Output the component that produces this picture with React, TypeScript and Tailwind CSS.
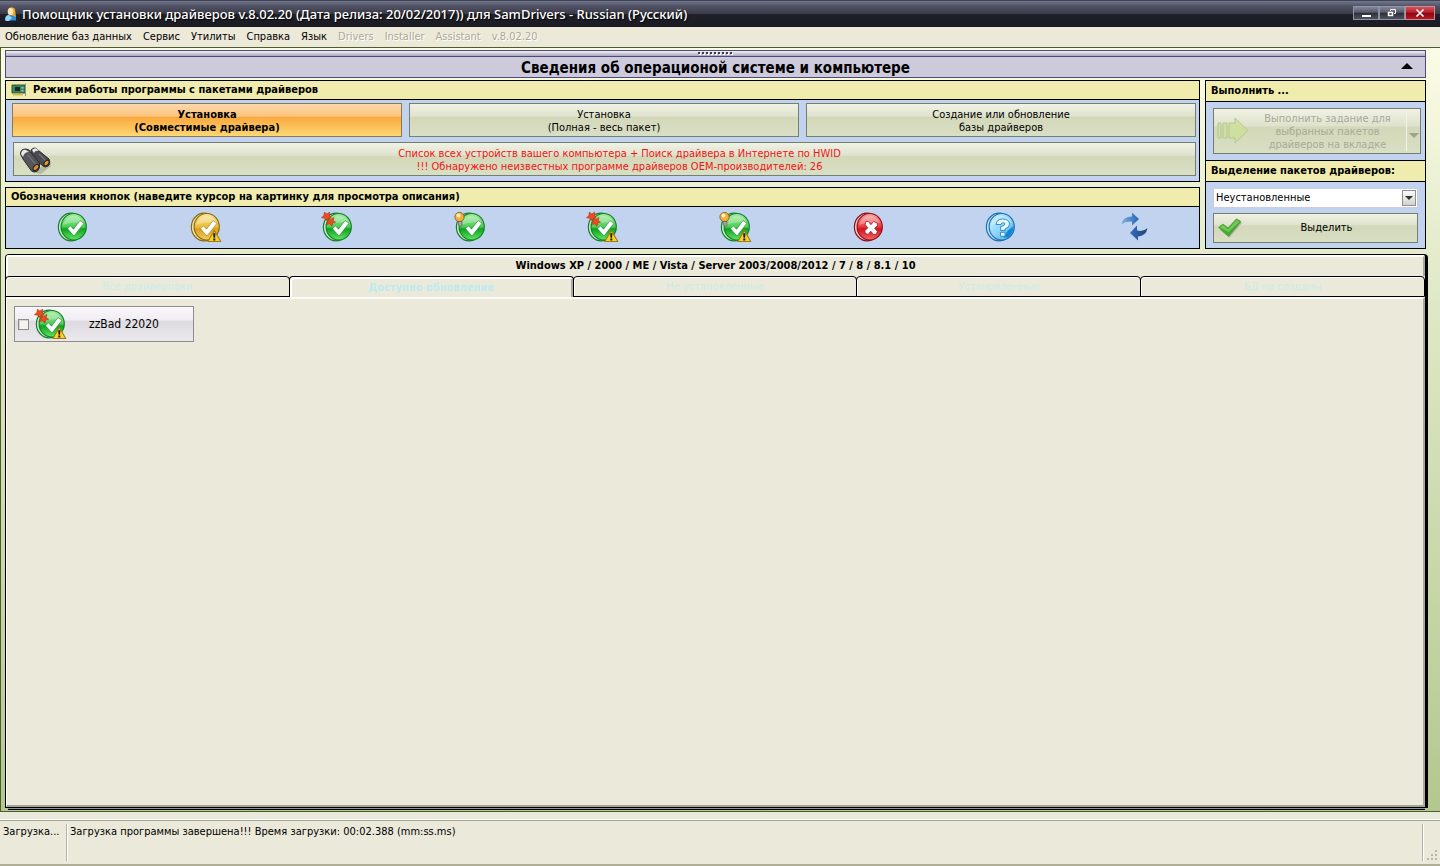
import { type ReactNode } from "react";

const olive =
  "border border-[#757f70] bg-[linear-gradient(#f1f2e4_0%,#dfe2cd_38%,#d3d8b9_42%,#d9dfc4_100%)]";

function Defs() {
  return (
    <svg className="absolute h-0 w-0" aria-hidden="true">
      <defs>
        <linearGradient id="green" x1="0" y1="0" x2="0" y2="1">
          <stop offset="0" stopColor="#a5eda2" />
          <stop offset=".5" stopColor="#4dcf56" />
          <stop offset=".58" stopColor="#0fa31f" />
          <stop offset="1" stopColor="#5fe863" />
        </linearGradient>
        <linearGradient id="gold" x1="0" y1="0" x2="0" y2="1">
          <stop offset="0" stopColor="#fae69a" />
          <stop offset=".5" stopColor="#eabd39" />
          <stop offset=".58" stopColor="#d69f1c" />
          <stop offset="1" stopColor="#f5d25c" />
        </linearGradient>
        <linearGradient id="red" x1="0" y1="0" x2="0" y2="1">
          <stop offset="0" stopColor="#fba6a6" />
          <stop offset=".5" stopColor="#e8383f" />
          <stop offset=".58" stopColor="#d3121b" />
          <stop offset="1" stopColor="#f8646c" />
        </linearGradient>
        <linearGradient id="blue" x1="0" y1="0" x2="1" y2="1">
          <stop offset="0" stopColor="#d2f2fd" />
          <stop offset=".5" stopColor="#8fd6f7" />
          <stop offset="1" stopColor="#3aa6ea" />
        </linearGradient>
        <linearGradient id="arrow" x1="0" y1="0" x2="1" y2="0">
          <stop offset="0" stopColor="#7fb2e6" />
          <stop offset="1" stopColor="#2462b4" />
        </linearGradient>
        <linearGradient id="arrowBack" x1="0" y1="0" x2="1" y2="0">
          <stop offset="0" stopColor="#2f6fc4" />
          <stop offset="1" stopColor="#27406f" />
        </linearGradient>
      </defs>
    </svg>
  );
}

const rims: Record<string, string> = {
  green: "#17802a",
  gold: "#8a6a12",
  red: "#8e1219",
  blue: "#1c6fb2",
};

const backs: Record<string, string> = {
  green: "#c9f0cb",
  gold: "#f6e7b0",
  red: "#f9c9cb",
  blue: "#c9e9fb",
};

type Tone = "green" | "gold" | "red" | "blue";

function Badge({
  tone,
  label,
  warning,
  cross,
  bulb,
  children,
}: {
  tone: Tone;
  label: string;
  warning?: boolean;
  cross?: boolean;
  bulb?: boolean;
  children?: ReactNode;
}) {
  return (
    <svg width="34" height="32" viewBox="0 0 34 32" role="img" aria-label={label}>
      <ellipse cx="16" cy="16" rx="12.6" ry="13.8" fill={backs[tone]} stroke={rims[tone]} strokeWidth="1.200" />
      <ellipse cx="18.700" cy="15.800" rx="12.600" ry="13.300" fill={`url(#${tone})`} stroke={rims[tone]} strokeWidth="1.200" />
      <path d="M8 14 A11 11.500 0 0 1 29 12 Q18 10 8 14Z" fill="#fff" opacity=".28" />
      {children ?? (
        <path
          d="M12.500 17.800 l3-3 3 3.400 6.500-8.600 4 2.600 -10 12.800Z"
          fill="#fff"
          stroke={tone === "gold" ? "#9a7716" : "#17802a"}
          strokeWidth=".6"
        />
      )}
      {cross && (
        <g fill="#ee4a22" stroke="#b03413" strokeWidth=".6" strokeLinejoin="round">
          <path d="M4.500 1 L6.500 3 L9.800 1.200 L9.500 4.500 L11 6.500 L8.500 7.200 L6.500 9.500 L4.800 7.200 L1.500 6.800 L3.800 4.500Z" />
          <path d="M8.500 7.500 L11 8.200 L14 6.500 L13.200 9.500 L15.600 11.200 L12.600 12 L12 15.200 L9.800 13 L6 13.500 L7.800 11Z" />
        </g>
      )}
      {bulb && (
        <g>
          <circle cx="6.500" cy="6" r="4.600" fill="#f2b13f" stroke="#8f5f1b" strokeWidth=".9" />
          <circle cx="5.400" cy="4.600" r="2" fill="#fff0b8" />
          <path d="M5 10.500h4v4l-1.600 1.200L5.400 14Z" fill="#a3a3a3" stroke="#5b5b5b" strokeWidth=".7" />
        </g>
      )}
      {warning && (
        <g>
          <path
            d="M26.300 19.500 L32.800 30.500 H19.800Z"
            fill="#f8d22c"
            stroke="#a37b10"
            strokeWidth="1.100"
            strokeLinejoin="round"
          />
          <path d="M25.200 22.300h2.200l-.3 4.400h-1.600ZM25.300 27.600h2v1.800h-2Z" fill="#1d1a0a" />
        </g>
      )}
    </svg>
  );
}

function SwapArrows() {
  return (
    <svg width="34" height="32" viewBox="0 0 34 32" role="img" aria-label="Обновить">
      <path d="M5.500 13.500 Q6.500 5.500 16 5.500V1.500l7 6.500L16 14.500v-4Q9.500 10 5.500 13.500Z" fill="url(#arrow)" />
      <path d="M31.500 17 Q30 25 22 25.500V29.500l-8-7.500L21 14.500v5Q27.500 21 31.500 17Z" fill="url(#arrowBack)" />
    </svg>
  );
}

function Legend() {
  return (
    <div className="grid grow grid-cols-9 items-start justify-items-center bg-[#c1d3ef] pt-1">
      <Badge tone="green" label="Установлен" />
      <Badge tone="gold" label="Есть предупреждение" warning />
      <Badge tone="green" label="Новее" cross />
      <Badge tone="green" label="Рекомендуется" bulb />
      <Badge tone="green" label="Новее, предупреждение" cross warning />
      <Badge tone="green" label="Рекомендуется, предупреждение" bulb warning />
      <Badge tone="red" label="Ошибка">
        <path
          d="M14.800 10.500l2.600 0 2.500 3.200 2.700-3.200 3.500 1.500 .3 2.600-2.800 2.700 2.700 3-.8 2.700-3 .5-2.700-3.300-2.700 3.300-3-1.500-.2-2.500 3-2.700-2.700-3Z"
          fill="#fff"
          stroke="#8e1219"
          strokeWidth=".7"
        />
      </Badge>
      <Badge tone="blue" label="Неизвестно">
        <path d="M20 26.500l5-7 5.500-4.500q-.5 8-5.500 11.500Z" fill="#1286dd" />
        <path
          d="M13 13.500q.5-5.500 6.800-5.500 6.700.3 6.700 5.200 0 3.300-4.500 4.800v1.500h-4.300v-4q4.300-.8 4.300-2.500 0-1.200-2-1.200-1.700 0-2 1.700ZM17.500 21.300h4.600v4h-4.600Z"
          fill="#e8f8ff"
          stroke="#2387c9"
          strokeWidth=".9"
        />
      </Badge>
      <SwapArrows />
    </div>
  );
}

function Binoculars() {
  return (
    <svg width="32" height="30" viewBox="0 0 32 30" aria-hidden="true">
      <path d="M14 24l16-7 1 3-10 8-6-1Z" fill="#8f937f" opacity=".5" />
      <path d="M11 4q4-4 7 0l11 9q2 5-1 7t-5 0L12 11Z" fill="#4a4a4f" stroke="#2b2b2e" />
      <path d="M0.500 8q0-5 5-5 4 0 5 3l9 11q1 5-2 8-4 2-6 0L3 13Z" fill="#55555b" stroke="#2b2b2e" />
      <path d="M1 8q1-5 5-4l3 2q-5 0-6 5ZM12 4q3-3 5-1l2 2q-4-1-5 2Z" fill="#e9e9ec" />
      <path d="M8 9l8 10M19 8l7 7" stroke="#77777d" strokeWidth="1.200" />
      <ellipse cx="16" cy="21.500" rx="3.600" ry="2.200" fill="#d78e28" stroke="#222" transform="rotate(-50 16 21.500)" />
      <ellipse cx="26.500" cy="17" rx="3.200" ry="2" fill="#e09a2e" stroke="#222" transform="rotate(-50 26.500 17)" />
    </svg>
  );
}

function BoardIcon() {
  return (
    <svg width="16" height="14" viewBox="0 0 16 14" aria-hidden="true">
      <path d="M1 2h13v8H1Z" fill="#3c8560" stroke="#28563d" />
      <path d="M4 4h5v4H4Z" fill="#1a2620" />
      <path d="M10.500 4h2v1.500h-2ZM10.500 7h2v1.500h-2Z" fill="#8fd0a5" />
      <path d="M2 10.500h10v2H2Z" fill="#d5ba4a" />
      <path d="M14.500 0.500v12.500" stroke="#8f958a" />
    </svg>
  );
}

function AppIcon() {
  return (
    <svg width="14" height="16" viewBox="0 0 14 16" aria-hidden="true">
      <path d="M5 2q4-2 6 1l1 8-5 2-3-6Z" fill="#e7a52e" />
      <ellipse cx="6.500" cy="5.500" rx="2.800" ry="3.500" fill="#ffe6ae" />
      <path d="M2 14.500q0-5 5-5.500l5 2v3.500Z" fill="#2d8fdc" />
      <path d="M1 14q0-5 4-5l3 3-3 3H2Z" fill="#8fd8f6" />
    </svg>
  );
}

function TitleBar() {
  const control =
    "flex h-[14px] items-center justify-center border border-[#8d93a6] text-white";
  return (
    <header className="flex h-[27px] shrink-0 items-center border-t border-[#3f4356] bg-[linear-gradient(#73758c_0%,#515365_20%,#3a3c4a_48%,#1f2029_52%,#1b1b24_100%)] pl-1 pr-[5px]">
      <AppIcon />
      <h1 className="ml-1 grow whitespace-nowrap font-['Noto_Sans'] text-[13px] font-medium leading-4 text-white [text-shadow:1px_1px_1px_#000]">
        Помощник установки драйверов v.8.02.20 (Дата релиза: 20/02/2017)) для SamDrivers - Russian (Русский)
      </h1>
      <div className="flex pb-0.5">
        <button aria-label="Свернуть" className={`${control} w-[26px] bg-[linear-gradient(#85889a,#555869_45%,#2b2d3a_50%,#50535f)]`}>
          <svg width="10" height="10" viewBox="0 0 10 10"><path d="M1 7h9v2H1Z" fill="#fff" /></svg>
        </button>
        <button aria-label="Восстановить" className={`${control} w-[26px] bg-[linear-gradient(#85889a,#555869_45%,#2b2d3a_50%,#50535f)]`}>
          <svg width="10" height="10" viewBox="0 0 10 10" fill="none" stroke="#fff">
            <path d="M3.500 3V1.500h5v4H7" />
            <path d="M1.500 4.500h4v3h-4Z" strokeWidth="1.500" />
          </svg>
        </button>
        <button aria-label="Закрыть" className={`${control} w-[30px] border-[#c08f95] bg-[linear-gradient(#d5525a,#b41f28_45%,#8b0610_50%,#b81720)]`}>
          <svg width="10" height="10" viewBox="0 0 10 10"><path d="M1.500 1.500l7 7M8.500 1.500l-7 7" stroke="#fff" strokeWidth="1.600" /></svg>
        </button>
      </div>
    </header>
  );
}

function MenuBar() {
  const items = ["Обновление баз данных", "Сервис", "Утилиты", "Справка", "Язык"];
  const disabled = ["Drivers", "Installer", "Assistant", "v.8.02.20"];
  return (
    <nav className="flex h-5 shrink-0 items-center gap-[11px] whitespace-nowrap bg-[#ede9d8] pl-[5px]">
      {items.map((t) => (
        <button key={t}>{t}</button>
      ))}
      {disabled.map((t) => (
        <button key={t} disabled className="text-[#aca899] [text-shadow:1px_1px_0_#fff]">
          {t}
        </button>
      ))}
    </nav>
  );
}

function Heading({ children, tall }: { children: ReactNode; tall?: boolean }) {
  return (
    <h2
      className={`flex shrink-0 items-center whitespace-nowrap border-b border-black bg-[#efecae] pl-[5px] font-bold ${
        tall ? "h-[21px]" : "h-[19px]"
      }`}
    >
      {children}
    </h2>
  );
}

function Info() {
  return (
    <section className="border border-[#504a72] bg-[#cdcadb]">
      <div className="flex h-[6px] items-center justify-center border-b border-[#504a72] bg-[linear-gradient(#f2f1f7,#a9a6bf)]">
        <svg width="36" height="4" viewBox="0 0 36 4" aria-hidden="true">
          {[0, 4, 8, 12, 16, 20, 24, 28, 32].map((x) => (
            <g key={x}>
              <rect x={x + 1} y="1" width="2" height="2" fill="#fff" />
              <rect x={x} y="0" width="2" height="2" fill="#3d3a52" />
            </g>
          ))}
        </svg>
      </div>
      <button className="relative block h-5 w-full pt-0.5 text-center text-[15px] font-bold leading-[18px]">
        Сведения об операционой системе и компьютере
        <svg className="absolute right-3 top-1.5" width="12" height="6" viewBox="0 0 12 6" aria-hidden="true">
          <path d="M6 0l6 6H0Z" />
        </svg>
      </button>
    </section>
  );
}

function Modes() {
  const rest = [
    ["Установка", "(Полная - весь пакет)"],
    ["Создание или обновление", "базы драйверов"],
  ];
  return (
    <section className="flex h-[102px] flex-col border border-black bg-[#c1d3ef]">
      <Heading>
        <BoardIcon />
        <span className="ml-1.5">Режим работы программы с пакетами драйверов</span>
      </Heading>
      <div className="grid grid-cols-3 gap-[7px] pl-1.5 pr-[3px] pt-[3px]">
        <button className="h-[34px] border border-[#8d7a55] bg-[linear-gradient(#fcd9ad_0%,#fdc47d_38%,#faa93f_42%,#fdd873_100%)] pt-px font-bold leading-[13px]">
          Установка
          <br />
          (Совместимые драйвера)
        </button>
        {rest.map(([a, b]) => (
          <button key={a} className={`h-[34px] pt-px leading-[13px] ${olive}`}>
            {a}
            <br />
            {b}
          </button>
        ))}
      </div>
      <button className={`relative ml-[7px] mr-[3px] mt-[5px] h-[34px] pl-[30px] pt-px leading-[13px] text-[#f01414] ${olive}`}>
        <span className="absolute left-1.5 top-[3px]">
          <Binoculars />
        </span>
        Список всех устройств вашего компьютера + Поиск драйвера в Интернете по HWID
        <br />
        !!! Обнаружено неизвестных программе драйверов OEM-производителей: 26
      </button>
    </section>
  );
}

function Actions() {
  return (
    <aside className="flex w-[221px] shrink-0 flex-col border border-black bg-[#c1d3ef]">
      <Heading tall>Выполнить ...</Heading>
      <div className="flex h-[58px] pl-[7px] pr-1 pt-1.5">
        <button disabled className={`flex h-[46px] grow items-center leading-[13px] text-[#a9aa98] ${olive}`}>
          <svg className="ml-[3px]" width="32" height="28" viewBox="0 0 32 28" aria-hidden="true">
            <path
              d="M1 6h3v15H1ZM6 6h4v15H6ZM12 6h6V1l13 12.500L18 26v-5h-6Z"
              fill="#cfdf9f"
              stroke="#b5c794"
            />
          </svg>
          <span className="grow text-center">
            Выполнить задание для
            <br />
            выбранных пакетов
            <br />
            драйверов на вкладке
          </span>
          <span className="flex h-10 w-[14px] items-center justify-center border-l border-[#f3f4e6] pt-2">
            <svg width="10" height="5" viewBox="0 0 10 5" aria-hidden="true">
              <path d="M0 0h10L5 5Z" fill="#a0a08c" />
            </svg>
          </span>
        </button>
      </div>
      <div className="flex flex-col border-t border-black">
        <Heading tall>
          <label htmlFor="selection">Выделение пакетов драйверов:</label>
        </Heading>
      </div>
      <div className="flex flex-col gap-[5px] pl-[7px] pr-[7px] pt-1.5">
        <div className="relative flex h-5">
          <select
            id="selection"
            className="w-full appearance-none border border-[#c9cddd] bg-white pl-0.5 pr-5 outline-none"
          >
            <option>Неустановленные</option>
          </select>
          <span className="pointer-events-none absolute right-[2px] top-[2px] flex h-4 w-[14px] items-center justify-center border border-[#8f9191] bg-[linear-gradient(#fafafa,#d2d2cc)]">
            <svg width="8" height="4" viewBox="0 0 8 4" aria-hidden="true">
              <path d="M0 0h8L4 4Z" fill="#333" />
            </svg>
          </span>
        </div>
        <button className={`flex h-[30px] items-center ${olive}`}>
          <svg className="ml-1" width="24" height="20" viewBox="0 0 24 20" aria-hidden="true">
            <path d="M2 12l4-4 5 3.500L20 2l4 3L11.500 19.500Z" fill="#8f927c" opacity=".5" />
            <path d="M0.500 9.500L5 6l5 4L18.500 0.800 23 3.500 10.500 18.500Z" fill="#43a92f" stroke="#4d8f43" strokeWidth=".6" />
            <path d="M2 9.500L5 7l5 4.500 8.500-9.500 3 1.800L10.500 14Z" fill="#74c956" />
          </svg>
          <span className="grow pr-1.5 text-center">Выделить</span>
        </button>
      </div>
    </aside>
  );
}

function Tabs() {
  const tabs = [
    "Все драйверпаки",
    "Доступно обновление",
    "Не установленные",
    "Установленные",
    "БД не созданы",
  ];
  return (
    <section className="-mr-0.5 mt-[5px] flex grow flex-col">
      <div className="flex grow flex-col rounded-t-[4px] border-b border-l border-r-[3px] border-t border-black bg-[#ebe9d9]">
        <div className="h-[21px] rounded-t-[3px] border-l-2 border-r-2 border-t-2 border-l-white border-r-[#aaa9a0] border-t-white text-center font-bold leading-[18px]">
          Windows XP / 2000 / ME / Vista / Server 2003/2008/2012 / 7 / 8 / 8.1 / 10
        </div>
        <div role="tablist" className="-ml-px flex text-[#cbebea]">
          {tabs.map((t, i) => (
            <button
              key={t}
              role="tab"
              aria-selected={i === 1}
              className={
                i === 1
                  ? "-ml-px h-[21px] flex-1 rounded-t-[4px] border-x border-t border-black pt-0.5 font-bold text-[#bdebf0] shadow-[inset_2px_2px_0_#fff,inset_-2px_0_0_#aaa9a0]"
                  : "-ml-px h-[21px] flex-1 rounded-t-[4px] border border-black shadow-[inset_1px_1px_0_#fff] first:ml-0"
              }
            >
              {t}
            </button>
          ))}
        </div>
        <div
          role="tabpanel"
          className="grow border-b-2 border-l border-r-2 border-t-2 border-b-[#a3a39b] border-l-white border-r-[#aaa9a0] border-t-white/80 pl-[7px] pt-[7px]"
        >
          <label className="flex h-9 w-[180px] items-center border border-[#8e8c90] bg-[linear-gradient(#fbf8fc_0%,#f0edf3_38%,#dddbe0_42%,#ebe9ed_100%)] pl-[3px] text-xs">
            <input
              type="checkbox"
              className="h-[11px] w-[11px] shrink-0 appearance-none border border-[#8c8c8c] bg-[#f4f3ee] shadow-[inset_1px_1px_0_#d5d5d0]"
            />
            <span className="ml-1">
              <Badge tone="green" label="Новее, предупреждение" cross warning />
            </span>
            <span className="grow pr-3 text-center">zzBad 22020</span>
          </label>
        </div>
      </div>
      <div className="ml-[3px] mr-[3px] h-[2px] border-b border-black bg-[#8f948a]" />
    </section>
  );
}

function StatusBar() {
  return (
    <footer className="flex h-[54px] shrink-0 flex-col border-b-2 border-[#b1ae98] bg-[#ebe9d9]">
      <div className="h-2 border-b border-white bg-[#e9eadb]" />
      <div className="flex grow border-t border-[#a7a894] pb-[3px] pt-[3px]">
        <span className="w-[67px] border-r border-[#b5b3a3] pl-[3px] leading-4">Загрузка...</span>
        <span className="grow border-l border-r border-l-white border-r-[#b5b3a3] pl-0.5 leading-4">
          Загрузка программы завершена!!! Время загрузки: 00:02.388 (mm:ss.ms)
        </span>
        <span className="flex w-[17px] items-end justify-end border-l border-white pr-0.5">
          <svg width="11" height="11" viewBox="0 0 11 11" fill="#b7b4a0" aria-hidden="true">
            <path d="M8 0h2v2H8ZM4 4h2v2H4ZM8 4h2v2H8ZM0 8h2v2H0ZM4 8h2v2H4ZM8 8h2v2H8Z" />
          </svg>
        </span>
      </div>
    </footer>
  );
}

export default function App() {
  return (
    <div className="flex min-h-screen flex-col overflow-hidden bg-[#ebe9d9] font-['DejaVu_Sans_Condensed','DejaVu_Sans',sans-serif] text-[11px] leading-[14px] text-black">
      <Defs />
      <TitleBar />
      <MenuBar />
      <main className="flex grow flex-col border-y border-l border-[#4c5c30] bg-[linear-gradient(#fbfce6,#e3ebcb_28%,#b4c78f)] pb-px pl-1 pr-[14px] pt-[2px]">
        <Info />
        <div className="mt-0.5 flex gap-[5px]">
          <div className="flex grow flex-col gap-[5px]">
            <Modes />
            <section className="flex h-[62px] flex-col border border-black">
              <Heading>Обозначения кнопок (наведите курсор на картинку для просмотра описания)</Heading>
              <Legend />
            </section>
          </div>
          <Actions />
        </div>
        <Tabs />
      </main>
      <StatusBar />
    </div>
  );
}
